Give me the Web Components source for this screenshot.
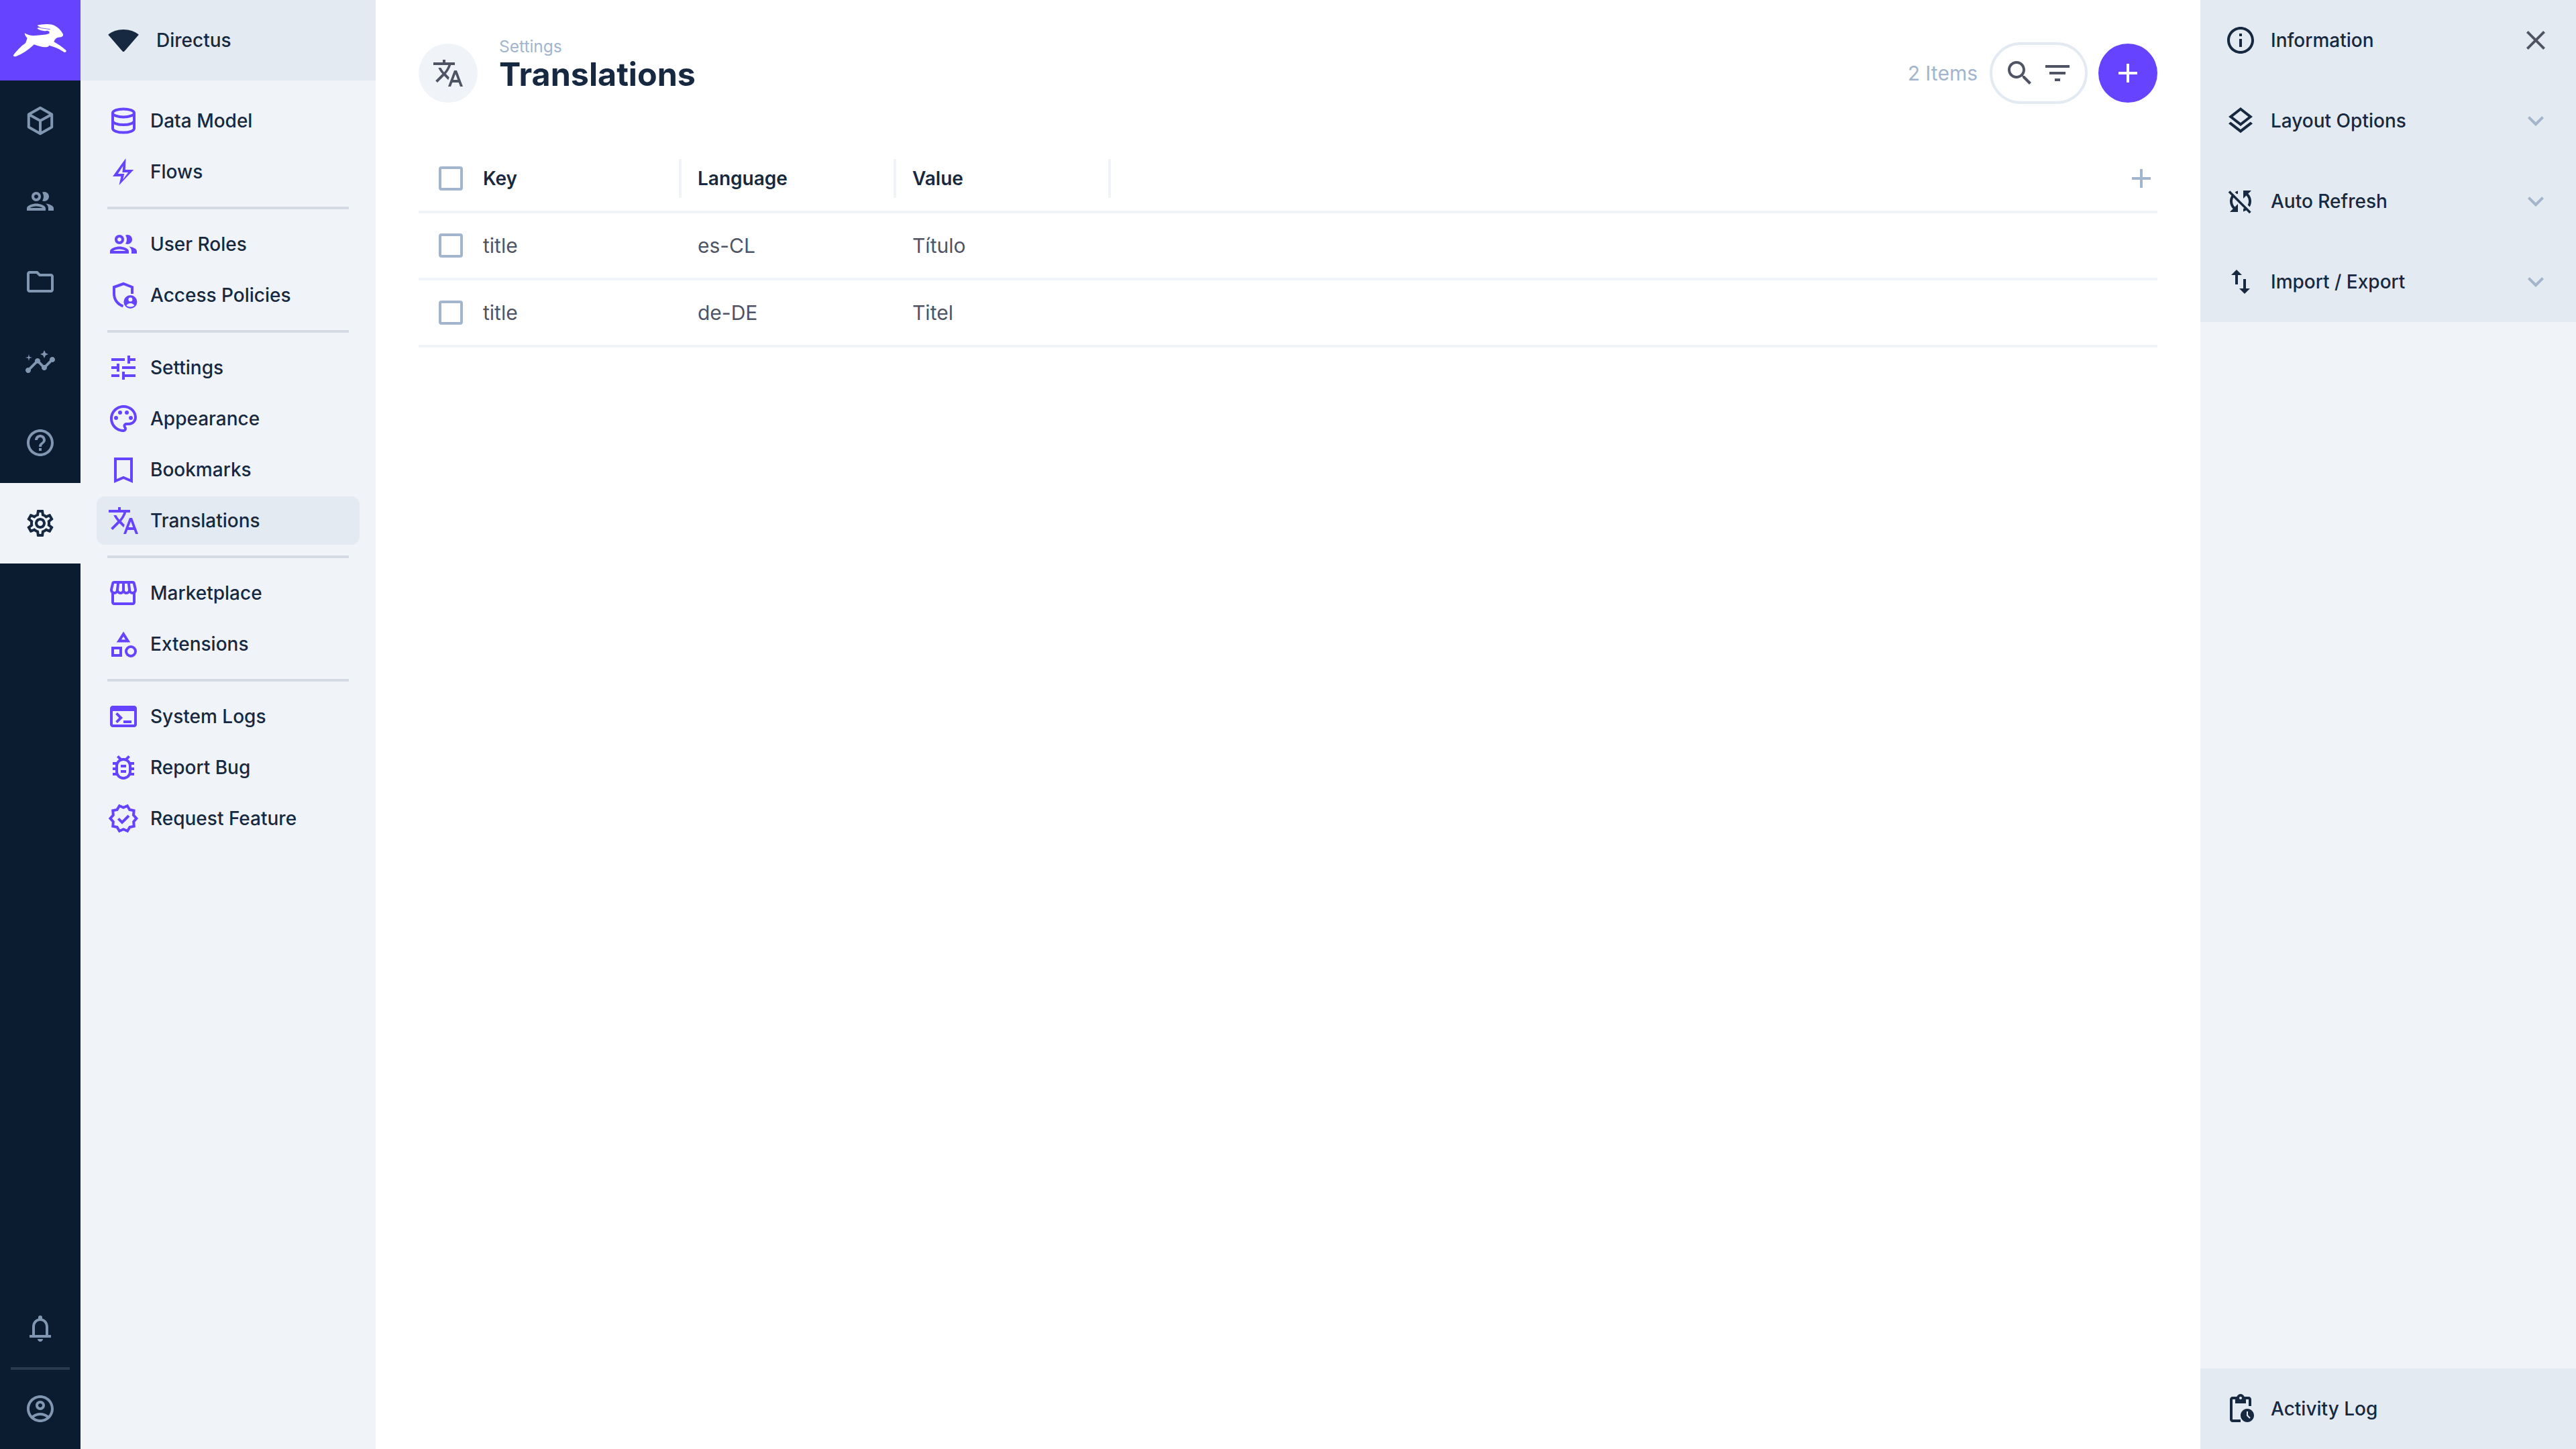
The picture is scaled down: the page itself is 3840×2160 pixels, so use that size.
<!DOCTYPE html>
<html lang="en">
<head>
<meta charset="utf-8">
<title>Translations</title>
<style>
  html, body { margin: 0; height: 100%; background: #fff; }
  body { font-family: Inter, "Liberation Sans", sans-serif; color: #172940; }
</style>
</head>
<body>
<app-shell>
  <module-bar slot="modules"></module-bar>
  <nav-panel slot="nav" title="Directus">
    <nav-item icon="database">Data Model</nav-item>
    <nav-item icon="bolt">Flows</nav-item>
    <nav-divider></nav-divider>
    <nav-item icon="group">User Roles</nav-item>
    <nav-item icon="policy">Access Policies</nav-item>
    <nav-divider></nav-divider>
    <nav-item icon="tune">Settings</nav-item>
    <nav-item icon="palette">Appearance</nav-item>
    <nav-item icon="bookmark">Bookmarks</nav-item>
    <nav-item icon="translate" active>Translations</nav-item>
    <nav-divider></nav-divider>
    <nav-item icon="storefront">Marketplace</nav-item>
    <nav-item icon="category">Extensions</nav-item>
    <nav-divider></nav-divider>
    <nav-item icon="terminal">System Logs</nav-item>
    <nav-item icon="bug">Report Bug</nav-item>
    <nav-item icon="verified">Request Feature</nav-item>
  </nav-panel>
  <main-view slot="main">
    <page-header></page-header>
    <data-table></data-table>
  </main-view>
  <side-bar slot="side"></side-bar>
</app-shell>

<script>
const ICONS = {
  cube: '<path fill="none" stroke="currentColor" stroke-width="2" stroke-linejoin="round" d="M12 2.400 20.600 7.300v9.400L12 21.600 3.400 16.700V7.300zM3.400 7.300 12 12l8.600-4.700M12 12v9.600"/>',
  group: '<path d="M9 13.75c-2.34 0-7 1.17-7 3.5V19h14v-1.75c0-2.33-4.66-3.5-7-3.5zM4.34 17c.84-.58 2.87-1.25 4.66-1.25s3.82.67 4.66 1.25H4.34zM9 12c1.93 0 3.5-1.57 3.5-3.5S10.93 5 9 5 5.5 6.57 5.5 8.5 7.07 12 9 12zm0-5c.83 0 1.5.67 1.5 1.5S9.83 10 9 10s-1.5-.67-1.5-1.5S8.17 7 9 7zm7.04 6.81c1.16.84 1.96 1.96 1.96 3.44V19h4v-1.75c0-2.02-3.5-3.17-5.96-3.44zM15 12c1.93 0 3.5-1.57 3.5-3.5S16.93 5 15 5c-.54 0-1.04.13-1.5.35.63.89 1 1.98 1 3.15s-.37 2.26-1 3.15c.46.22.96.35 1.5.35z"/>',
  folder: '<path d="M9.17 6l2 2H20v10H4V6h5.17M10 4H4c-1.1 0-1.99.9-1.99 2L2 18c0 1.1.9 2 2 2h16c1.1 0 2-.9 2-2V8c0-1.1-.9-2-2-2h-8l-2-2z"/>',
  insights: '<path d="M21 8c-1.45 0-2.26 1.44-1.93 2.51l-3.55 3.56c-.3-.09-.74-.09-1.04 0l-2.55-2.55C12.27 10.45 11.46 9 10 9c-1.45 0-2.27 1.44-1.93 2.52l-4.56 4.55C2.44 15.74 1 16.55 1 18c0 1.1.9 2 2 2 1.45 0 2.26-1.44 1.93-2.51l4.55-4.56c.3.09.74.09 1.04 0l2.55 2.55C12.73 16.55 13.54 18 15 18c1.45 0 2.27-1.44 1.93-2.52l3.56-3.55c1.07.33 2.51-.48 2.51-1.93 0-1.1-.9-2-2-2z"/><path d="M15 9l.94-2.07L18 6l-2.06-.93L15 3l-.92 2.07L12 6l2.08.93zM3.5 11L4 9l2-.5L4 8l-.5-2L3 8l-2 .5L3 9z"/>',
  help: '<path d="M11 18h2v-2h-2v2zm1-16C6.48 2 2 6.48 2 12s4.48 10 10 10 10-4.48 10-10S17.52 2 12 2zm0 18c-4.41 0-8-3.59-8-8s3.59-8 8-8 8 3.59 8 8-3.59 8-8 8zm0-14c-2.21 0-4 1.79-4 4h2c0-1.1.9-2 2-2s2 .9 2 2c0 2-3 1.75-3 5h2c0-2.25 3-2.5 3-5 0-2.21-1.79-4-4-4z"/>',
  settings: '<path d="M19.43 12.98c.04-.32.07-.64.07-.98 0-.34-.03-.66-.07-.98l2.11-1.65c.19-.15.24-.42.12-.64l-2-3.46c-.09-.16-.26-.25-.44-.25-.06 0-.12.01-.17.03l-2.49 1c-.52-.4-1.08-.73-1.69-.98l-.38-2.65C14.46 2.18 14.25 2 14 2h-4c-.25 0-.46.18-.49.42l-.38 2.65c-.61.25-1.17.59-1.69.98l-2.49-1c-.06-.02-.12-.03-.18-.03-.17 0-.34.09-.43.25l-2 3.46c-.13.22-.07.49.12.64l2.11 1.65c-.04.32-.07.65-.07.98 0 .33.03.66.07.98l-2.11 1.65c-.19.15-.24.42-.12.64l2 3.46c.09.16.26.25.44.25.06 0 .12-.01.17-.03l2.49-1c.52.4 1.08.73 1.69.98l.38 2.65c.03.24.24.42.49.42h4c.25 0 .46-.18.49-.42l.38-2.65c.61-.25 1.17-.59 1.69-.98l2.49 1c.06.02.12.03.18.03.17 0 .34-.09.43-.25l2-3.46c.12-.22.07-.49-.12-.64l-2.11-1.65zm-1.98-1.71c.04.31.05.52.05.73 0 .21-.02.43-.05.73l-.14 1.13.89.7 1.08.84-.7 1.21-1.27-.51-1.04-.42-.9.68c-.43.32-.84.56-1.25.73l-1.06.43-.16 1.13-.2 1.35h-1.4l-.19-1.35-.16-1.13-1.06-.43c-.43-.18-.83-.41-1.23-.71l-.91-.7-1.06.43-1.27.51-.7-1.21 1.08-.84.89-.7-.14-1.13c-.03-.31-.05-.54-.05-.74s.02-.43.05-.73l.14-1.13-.89-.7-1.08-.84.7-1.21 1.27.51 1.04.42.9-.68c.43-.32.84-.56 1.25-.73l1.06-.43.16-1.13.2-1.35h1.39l.19 1.35.16 1.13 1.06.43c.43.18.83.41 1.23.71l.91.7 1.06-.43 1.27-.51.7 1.21-1.07.85-.89.7.14 1.13zM12 8c-2.21 0-4 1.79-4 4s1.79 4 4 4 4-1.79 4-4-1.79-4-4-4zm0 6c-1.1 0-2-.9-2-2s.9-2 2-2 2 .9 2 2-.9 2-2 2z"/>',
  bell: '<path d="M6 17v-6c0-3 1.7-5.6 4.5-6.3V4a1.5 1.5 0 0 1 3 0v.7C16.3 5.4 18 8 18 11v6h-2v-6c0-2.5-1.5-4.5-4-4.5S8 8.5 8 11v6zM4 17h16v2H4zM10 20h4c0 1.1-.9 2-2 2s-2-.9-2-2z"/>',
  account: '<path d="M12 2C6.48 2 2 6.48 2 12s4.48 10 10 10 10-4.48 10-10S17.52 2 12 2zM7.35 18.5C8.66 17.56 10.26 17 12 17s3.34.56 4.65 1.5c-1.31.94-2.91 1.5-4.65 1.5s-3.34-.56-4.65-1.5zm10.79-1.38C16.45 15.8 14.32 15 12 15s-4.45.8-6.14 2.12C4.7 15.73 4 13.95 4 12c0-4.42 3.58-8 8-8s8 3.58 8 8c0 1.95-.7 3.73-1.86 5.12z"/><path d="M12 6c-1.93 0-3.5 1.57-3.5 3.5S10.07 13 12 13s3.5-1.57 3.5-3.5S13.93 6 12 6zm0 5c-.83 0-1.5-.67-1.5-1.5S11.17 8 12 8s1.5.67 1.5 1.5S12.83 11 12 11z"/>',
  wifi: '<path d="M12 20.5c-.3 0-.5-.1-.7-.3L.6 7.9C3.4 5.4 7.4 4 12 4s8.600 1.400 11.400 3.900L12.700 20.200c-.2.2-.4.3-.7.3z"/>',
  database: '<g fill="none" stroke="currentColor" stroke-width="2"><ellipse cx="12" cy="6.200" rx="8" ry="3"/><path d="M4 6.200v11.600c0 1.700 3.600 3 8 3s8-1.300 8-3V6.200M4 12c0 1.700 3.600 3 8 3s8-1.300 8-3"/></g>',
  bolt: '<path fill-rule="evenodd" d="M13.750 2 4 15.500h6.200L8.750 22 19.600 10.500h-6.200zM11.700 7.800 7.900 13.500h4.700L11.700 17.700 15.500 12.500h-4.300z"/>',
  policy: '<path fill="none" stroke="currentColor" stroke-width="2" d="M18.500 11V6L12 3.500 5 6v5c0 4.300 2.800 8 6.800 9.200"/><circle cx="17.200" cy="17" r="5"/><circle cx="17.200" cy="15.300" r="1.500" fill="#f0f4f9"/><path fill="#f0f4f9" d="M14.200 19.800c.6-1.200 1.800-1.800 3-1.800s2.400.6 3 1.800c-.8.600-1.900 1-3 1s-2.200-.4-3-1z"/>',
  tune: '<path d="M3 17v2h6v-2H3zM3 5v2h10V5H3zm10 16v-2h8v-2h-8v-2h-2v6h2zM7 9v2H3v2h4v2h2V9H7zm14 4v-2H11v2h10zm-6-4h2V7h4V5h-4V3h-2v6z"/>',
  palette: '<path d="M12 22C6.490 22 2 17.510 2 12S6.490 2 12 2s10 4.040 10 9c0 3.310-2.690 6-6 6h-1.770c-.28 0-.5.22-.5.5 0 .12.05.23.13.33.41.47.64 1.060.64 1.670 0 1.380-1.120 2.500-2.500 2.500zm0-18c-4.410 0-8 3.590-8 8s3.590 8 8 8c.28 0 .5-.22.5-.5 0-.16-.08-.28-.14-.35-.41-.46-.63-1.050-.63-1.650 0-1.380 1.120-2.500 2.500-2.500H16c2.210 0 4-1.790 4-4 0-3.860-3.590-7-8-7z"/><circle cx="6.500" cy="11.500" r="1.500"/><circle cx="9.500" cy="7.500" r="1.500"/><circle cx="14.500" cy="7.500" r="1.500"/><circle cx="17.500" cy="11.500" r="1.500"/>',
  bookmark: '<path d="M19 3H5v19l7-3 7 3V3zm-2 16-5-2.180L7 19V5h10v14z"/>',
  translate: '<path d="M12.870 15.070l-2.540-2.510.03-.03c1.740-1.940 2.980-4.170 3.710-6.530H17V4h-7V2H8v2H1v1.990h11.170C11.500 7.920 10.440 9.750 9 11.350 8.070 10.320 7.300 9.190 6.690 8h-2c.73 1.630 1.730 3.170 2.980 4.560l-5.090 5.020L4 19l5-5 3.110 3.110.76-2.040zM18.500 10h-2L12 22h2l1.120-3h4.750L21 22h2l-4.500-12zm-2.620 7l1.620-4.330L19.120 17h-3.240z"/>',
  storefront: '<path d="M21.900 8.890l-1.050-4.370c-.22-.9-1-1.520-1.910-1.520H5.050c-.9 0-1.690.63-1.900 1.520L2.100 8.890c-.24 1.020-.02 2.060.62 2.880.08.11.19.19.28.29V19c0 1.100.9 2 2 2h14c1.100 0 2-.9 2-2v-6.940c.09-.09.2-.18.28-.28.64-.82.87-1.870.62-2.890zm-2.990-3.900l1.050 4.370c.1.42.01.84-.25 1.170-.14.18-.44.47-.94.47-.61 0-1.140-.49-1.210-1.140L16.980 5l1.930-.01zM13 5h1.960l.54 4.520c.05.39-.07.78-.33 1.070-.22.26-.54.41-.95.41-.67 0-1.220-.59-1.220-1.310V5zM8.490 9.520L9.040 5H11v4.690c0 .72-.55 1.310-1.290 1.310-.34 0-.65-.15-.89-.41-.25-.29-.37-.68-.33-1.070zm-4.450-.16L5.050 5h1.970l-.58 4.860c-.08.65-.6 1.140-1.210 1.140-.49 0-.8-.29-.93-.47-.27-.32-.36-.75-.26-1.170zM5 19v-6.030c.08.01.15.03.23.03.87 0 1.660-.36 2.240-.95.6.6 1.400.95 2.310.95.87 0 1.650-.36 2.230-.93.59.57 1.390.93 2.290.93.84 0 1.640-.35 2.240-.95.58.59 1.370.95 2.240.95.08 0 .15-.02.23-.03V19H5z"/>',
  category: '<g fill="none" stroke="currentColor" stroke-width="2"><path d="M12 4.600 15.300 9.700H8.700z"/><rect x="4" y="15" width="6" height="5.500"/><circle cx="17.500" cy="17.500" r="3.500"/></g>',
  terminal: '<path d="M20 4H4c-1.100 0-2 .9-2 2v12c0 1.100.9 2 2 2h16c1.100 0 2-.9 2-2V6c0-1.100-.9-2-2-2zm0 14H4V8h16v10zm-2-1h-6v-2h6v2zM7.500 17l-1.410-1.410L8.670 13l-2.590-2.590L7.500 9l4 4-4 4z"/>',
  bug: '<path d="M20 8h-2.810c-.45-.78-1.070-1.450-1.820-1.960L17 4.410 15.590 3l-2.170 2.170C12.960 5.060 12.490 5 12 5c-.49 0-.96.06-1.410.17L8.410 3 7 4.410l1.620 1.630C7.880 6.550 7.260 7.220 6.810 8H4v2h2.090c-.05.33-.09.66-.09 1v1H4v2h2v1c0 .34.04.67.09 1H4v2h2.810c1.040 1.790 2.970 3 5.190 3s4.150-1.210 5.190-3H20v-2h-2.090c.05-.33.09-.66.09-1v-1h2v-2h-2v-1c0-.34-.04-.67-.09-1H20V8zm-4 7c0 2.210-1.790 4-4 4s-4-1.790-4-4v-4c0-2.210 1.790-4 4-4s4 1.790 4 4v4zm-6-1h4v2h-4zm0-4h4v2h-4z"/>',
  verified: '<g fill="none" stroke="currentColor" stroke-width="2"><path d="M21.700 12l-2.200-2.500.3-3.300-3.200-.7-1.700-2.900L12 3.900 9 2.600 7.300 5.500l-3.200.7.3 3.300L2.200 12l2.200 2.500-.3 3.300 3.200.7L9 21.400l3-1.300 3 1.300 1.700-2.900 3.200-.7-.3-3.300z"/><path d="M8.200 12.200l2.800 2.800 5-5"/></g>',
  search: '<path d="M15.500 14h-.79l-.28-.27C15.410 12.590 16 11.110 16 9.500 16 5.910 13.090 3 9.500 3S3 5.910 3 9.500 5.910 16 9.500 16c1.610 0 3.090-.59 4.230-1.570l.27.28v.79l5 4.990L20.490 19l-4.990-5zm-6 0C7.010 14 5 11.990 5 9.500S7.010 5 9.500 5 14 7.010 14 9.500 11.990 14 9.500 14z"/>',
  filter: '<path d="M10 18h4v-2h-4v2zM3 6v2h18V6H3zm3 7h12v-2H6v2z"/>',
  add: '<path d="M19 13h-6v6h-2v-6H5v-2h6V5h2v6h6v2z"/>',
  info: '<path d="M11 7h2v2h-2zm0 4h2v6h-2zm1-9C6.480 2 2 6.480 2 12s4.480 10 10 10 10-4.480 10-10S17.520 2 12 2zm0 18c-4.410 0-8-3.590-8-8s3.590-8 8-8 8 3.590 8 8-3.590 8-8 8z"/>',
  layers: '<path d="M11.990 18.540l-7.370-5.730L3 14.070l9 7 9-7-1.630-1.270zM12 16l7.360-5.730L21 9l-9-7-9 7 1.630 1.270L12 16zm0-11.470L17.740 9 12 13.470 6.260 9 12 4.530z"/>',
  syncoff: '<path d="M10 6.350V4.260c-.8.21-1.550.54-2.230.96l1.460 1.460c.25-.12.5-.24.77-.33zm-7.140-.94l2.360 2.360C4.450 8.990 4 10.440 4 12c0 2.210.91 4.200 2.360 5.640L4 20h6v-6l-2.240 2.240C6.680 15.150 6 13.660 6 12c0-1 .25-1.940.68-2.770l8.080 8.080c-.25.13-.5.25-.77.34v2.090c.8-.21 1.550-.54 2.230-.96l2.360 2.360 1.270-1.270L4.140 4.140 2.860 5.410zM20 4h-6v6l2.240-2.240C17.320 8.850 18 10.340 18 12c0 1-.25 1.940-.68 2.770l1.460 1.460C19.550 15.010 20 13.560 20 12c0-2.210-.91-4.200-2.360-5.640L20 4z"/>',
  importexport: '<path d="M9 3L5 6.990h3V14h2V6.990h3L9 3zm7 14.010V10h-2v7.010h-3L15 21l4-3.990h-3z"/>',
  close: '<path d="M19 6.410L17.590 5 12 10.590 6.410 5 5 6.410 10.590 12 5 17.590 6.410 19 12 13.410 17.590 19 19 17.590 13.410 12z"/>',
  chevron: '<path d="M16.590 8.590L12 13.170 7.410 8.590 6 10l6 6 6-6z"/>',
  activity: '<path d="M17 12c-2.760 0-5 2.240-5 5s2.240 5 5 5 5-2.240 5-5-2.240-5-5-5zm1.650 7.350L16.500 17.200V14h1v2.790l1.850 1.850-.7.71zM18 3h-3.180C14.400 1.840 13.300 1 12 1s-2.400.84-2.820 2H6c-1.100 0-2 .9-2 2v15c0 1.100.9 2 2 2h6v-2H6V5h2v3h8V5h2v5h2V5c0-1.100-.9-2-2-2zm-6 2c-.55 0-1-.45-1-1s.45-1 1-1 1 .45 1 1-.45 1-1 1z"/>'
};

class MIcon extends HTMLElement {
  connectedCallback() {
    const name = this.getAttribute("name");
    const root = this.shadowRoot || this.attachShadow({ mode: "open" });
    root.innerHTML = `
      <style>
        :host { display: inline-flex; width: 48px; height: 48px; flex: none; }
        svg { width: 100%; height: 100%; display: block; fill: currentColor; }
      </style>
      <svg viewBox="0 0 24 24" aria-hidden="true">${ICONS[name] || ""}</svg>
    `;
  }
}
customElements.define("m-icon", MIcon);

class AppShell extends HTMLElement {
  constructor() {
    super();
    this.attachShadow({ mode: "open" });
    this.shadowRoot.innerHTML = `
      <style>
        :host {
          display: grid;
          grid-template-columns: 120px 440px 1fr 560px;
          height: 2160px;
          overflow: hidden;
        }
      </style>
      <slot name="modules"></slot>
      <slot name="nav"></slot>
      <slot name="main"></slot>
      <slot name="side"></slot>
    `;
  }
}
customElements.define("app-shell", AppShell);

class ModuleBar extends HTMLElement {
  constructor() {
    super();
    this.attachShadow({ mode: "open" });
    const top = ["cube", "group", "folder", "insights", "help"];
    this.shadowRoot.innerHTML = `
      <style>
        :host {
          display: flex;
          flex-direction: column;
          background: #0c1c30;
          color: #8196b1;
          height: 2160px;
        }
        .logo { height: 120px; background: #6644ff; display: block; flex: none; }
        .logo svg { display: block; }
        .btn { height: 120px; display: flex; align-items: center; justify-content: center; flex: none; }
        .btn.active { background: #f0f4f9; color: #172940; }
        .spacer { flex: 1; }
        .rule { height: 4px; margin: -2px 16px; background: #293a50; flex: none; }
      </style>
      <div class="logo">
        <svg width="120" height="120" viewBox="0 0 120 120">
          <g transform="translate(10 25) scale(.3333)">
            <path fill="#fff" d="M30 172C42 155 62 133 84 118C88 108 90 100 92 95C86 90 81 83 80 73C92 80 108 86 128 84C150 82 172 82 188 76C194 70 192 64 180 62C165 66 148 62 136 52C142 49 146 47 150 46C144 44 140 42 137 38C155 33 185 30 205 36C228 44 243 60 252 78C254 86 248 92 232 92C222 93 215 100 211 112C228 122 250 135 266 151C268 158 260 162 254 157C240 146 215 135 190 128C184 142 150 135 122 124C98 148 68 168 42 177C34 179 28 177 30 172Z"/>
            <path fill="none" stroke="#6644ff" stroke-width="2.500" d="M142 47C156 52 176 53 194 56"/>
          </g>
        </svg>
      </div>
      ${top.map(n => `<div class="btn"><m-icon name="${n}"></m-icon></div>`).join("")}
      <div class="btn active"><m-icon name="settings"></m-icon></div>
      <div class="spacer"></div>
      <div class="btn"><m-icon name="bell"></m-icon></div>
      <div class="rule"></div>
      <div class="btn"><m-icon name="account"></m-icon></div>
    `;
  }
}
customElements.define("module-bar", ModuleBar);

class NavPanel extends HTMLElement {
  constructor() {
    super();
    this.attachShadow({ mode: "open" });
    this.shadowRoot.innerHTML = `
      <style>
        :host { display: block; background: #f0f4f9; height: 2160px; }
        header {
          height: 120px;
          background: #e4eaf1;
          display: flex;
          align-items: center;
          padding-left: 40px;
          gap: 25px;
          font-size: 28px;
          font-weight: 500;
          color: #172940;
        }
        .list { display: flex; flex-direction: column; gap: 4px; padding: 24px; }
      </style>
      <header><m-icon name="wifi"></m-icon><span>${this.getAttribute("title")}</span></header>
      <div class="list"><slot></slot></div>
    `;
  }
}
customElements.define("nav-panel", NavPanel);

class NavItem extends HTMLElement {
  constructor() {
    super();
    this.attachShadow({ mode: "open" });
    this.shadowRoot.innerHTML = `
      <style>
        :host {
          display: flex;
          align-items: center;
          gap: 16px;
          height: 72px;
          padding: 0 16px;
          border-radius: 12px;
          font-size: 28px;
          font-weight: 500;
          color: #172940;
        }
        :host([active]) { background: #e4eaf1; }
        m-icon { color: #6644ff; }
      </style>
      <m-icon name="${this.getAttribute("icon")}"></m-icon>
      <span><slot></slot></span>
    `;
  }
}
customElements.define("nav-item", NavItem);

class NavDivider extends HTMLElement {
  constructor() {
    super();
    this.attachShadow({ mode: "open" });
    this.shadowRoot.innerHTML = `
      <style>
        :host { display: block; height: 4px; margin: 12px 16px; background: #d3dae4; }
      </style>
    `;
  }
}
customElements.define("nav-divider", NavDivider);

class MainView extends HTMLElement {
  constructor() {
    super();
    this.attachShadow({ mode: "open" });
    this.shadowRoot.innerHTML = `
      <style>
        :host { display: block; background: #fff; padding: 0 64px; min-width: 0; }
      </style>
      <slot></slot>
    `;
  }
}
customElements.define("main-view", MainView);

class PageHeader extends HTMLElement {
  constructor() {
    super();
    this.attachShadow({ mode: "open" });
    this.shadowRoot.innerHTML = `
      <style>
        :host { display: flex; align-items: center; height: 218px; }
        .badge {
          width: 88px; height: 88px; border-radius: 50%;
          background: #f0f4f9; color: #4f5464;
          display: flex; align-items: center; justify-content: center;
          margin-right: 32px; flex: none;
        }
        .titles { flex: 1; display: flex; flex-direction: column; margin-top: -24px; }
        .crumb { font-size: 24.5px; line-height: 28px; color: #a2b5cd; }
        h1 { margin: 0; font-size: 48.4px; line-height: 56px; font-weight: 700; color: #172940; }
        .count { font-size: 30px; color: #a2b5cd; margin-right: 18px; }
        .pill {
          box-sizing: border-box;
          width: 146px; height: 92px;
          border: 4px solid #e4eaf1;
          border-radius: 46px;
          color: #4f5464;
          display: flex; align-items: center; justify-content: center; gap: 8px;
          margin-right: 16px;
        }
        .add {
          width: 88px; height: 88px; border-radius: 50%;
          background: #6644ff; color: #fff;
          display: flex; align-items: center; justify-content: center;
        }
      </style>
      <div class="badge"><m-icon name="translate"></m-icon></div>
      <div class="titles">
        <span class="crumb">Settings</span>
        <h1>Translations</h1>
      </div>
      <span class="count">2 Items</span>
      <div class="pill"><m-icon name="search"></m-icon><m-icon name="filter"></m-icon></div>
      <div class="add"><m-icon name="add"></m-icon></div>
    `;
  }
}
customElements.define("page-header", PageHeader);

class DataTable extends HTMLElement {
  constructor() {
    super();
    this.attachShadow({ mode: "open" });
    const rows = [["title", "es-CL", "Título"], ["title", "de-DE", "Titel"]];
    this.shadowRoot.innerHTML = `
      <style>
        :host { display: block; font-size: 30px; }
        .row {
          display: flex;
          align-items: center;
          height: 100px;
          box-sizing: border-box;
          border-bottom: 4px solid #f0f4f9;
          padding-left: 30px;
          color: #4f5464;
        }
        .head { color: #172940; font-weight: 600; font-size: 28px; }
        .check {
          box-sizing: border-box;
          width: 36px; height: 36px;
          border: 4px solid #a2b5cd;
          border-radius: 4px;
          margin-right: 30px;
          flex: none;
        }
        .cell { width: 320px; flex: none; display: flex; align-items: center; justify-content: space-between; box-sizing: border-box; }
        .head .cell { padding-right: 24px; }
        .handle { width: 4px; height: 58px; background: #f0f4f9; }
        .plus { margin-left: auto; color: #a2b5cd; }
      </style>
      <div class="row head">
        <div class="check"></div>
        <div class="cell"><span>Key</span><i class="handle"></i></div>
        <div class="cell"><span>Language</span><i class="handle"></i></div>
        <div class="cell"><span>Value</span><i class="handle"></i></div>
        <m-icon class="plus" name="add"></m-icon>
      </div>
      ${rows.map(r => `
        <div class="row">
          <div class="check"></div>
          ${r.map(c => `<div class="cell"><span>${c}</span></div>`).join("")}
        </div>`).join("")}
    `;
  }
}
customElements.define("data-table", DataTable);

class SideRow extends HTMLElement {
  constructor() {
    super();
    this.attachShadow({ mode: "open" });
    const end = this.getAttribute("end");
    this.shadowRoot.innerHTML = `
      <style>
        :host {
          display: flex;
          align-items: center;
          height: 120px;
          padding: 0 36px;
          background: #e4eaf1;
          color: #172940;
          font-size: 28px;
          font-weight: 500;
        }
        span { flex: 1; margin-left: 21px; }
        .chevron { color: #a2b5cd; }
        .close { color: #4f5464; }
      </style>
      <m-icon name="${this.getAttribute("icon")}"></m-icon>
      <span><slot></slot></span>
      ${end ? `<m-icon class="${end}" name="${end}"></m-icon>` : ""}
    `;
  }
}
customElements.define("side-row", SideRow);

class SideBar extends HTMLElement {
  constructor() {
    super();
    this.attachShadow({ mode: "open" });
    this.shadowRoot.innerHTML = `
      <style>
        :host { display: flex; flex-direction: column; background: #f0f4f9; height: 2160px; }
        .spacer { flex: 1; }
      </style>
      <side-row icon="info" end="close">Information</side-row>
      <side-row icon="layers" end="chevron">Layout Options</side-row>
      <side-row icon="syncoff" end="chevron">Auto Refresh</side-row>
      <side-row icon="importexport" end="chevron">Import / Export</side-row>
      <div class="spacer"></div>
      <side-row icon="activity">Activity Log</side-row>
    `;
  }
}
customElements.define("side-bar", SideBar);
</script>
</body>
</html>
